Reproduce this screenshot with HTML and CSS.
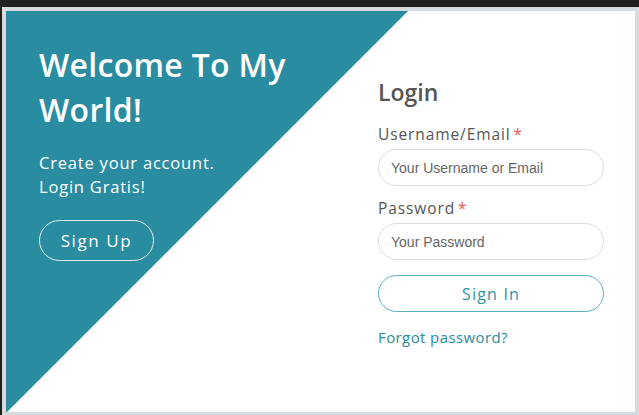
FILE: index.html
```html
<!DOCTYPE html>
<html lang="en">
<head>
<meta charset="utf-8">
<title>Login</title>
<link rel="stylesheet" href="styles.css">
</head>
<body>
<div class="frame">
  <div class="card">
    <div class="accent"></div>
    <section class="welcome">
      <h1 class="welcome-title">Welcome To My World!</h1>
      <p class="welcome-text">Create your account.<br>Login Gratis!</p>
      <button class="btn-outline-light" type="button">Sign Up</button>
    </section>
    <section class="login">
      <h2 class="login-title">Login</h2>
      <form class="login-form">
        <label class="field-label" for="user">Username/Email<span class="req">*</span></label>
        <input class="field-input" id="user" type="text" placeholder="Your Username or Email">
        <label class="field-label" for="pass">Password<span class="req">*</span></label>
        <input class="field-input" id="pass" type="password" placeholder="Your Password">
        <button class="btn-outline-teal" type="button">Sign In</button>
        <a class="forgot" href="#">Forgot password?</a>
      </form>
    </section>
  </div>
</div>
</body>
</html>
```
FILE: styles.css
```css
html { background: #202020; }
body {
  margin: 0;
  padding: 7px 0 0 2px;
  font-family: "Open Sans", "Noto Sans", sans-serif;
}
.frame {
  background: #d7dbde;
  padding: 4px 4px 3px 4px;
  height: 401px;
}
.card {
  position: relative;
  background: #fff;
  height: 401px;
  width: 629px;
  display: grid;
  grid-template-columns: 372px 226px;
  overflow: hidden;
}
.accent {
  position: absolute;
  inset: 0;
  background: #2a8ca0;
  clip-path: polygon(0 0, 402px 0, 0 402px);
}
.welcome {
  position: relative;
  padding: 31px 0 0 33px;
  color: #fff;
}
.welcome-title {
  margin: 0;
  font-size: 32px;
  font-weight: 600;
  line-height: 45px;
  letter-spacing: 0.3px;
  width: 270px;
}
.welcome-text {
  margin: 19px 0 0;
  font-size: 16.5px;
  line-height: 24px;
  letter-spacing: 0.8px;
}
.btn-outline-light {
  margin-top: 21px;
  width: 115px;
  height: 41px;
  border: 1px solid rgba(255,255,255,0.85);
  border-radius: 21px;
  background: transparent;
  color: #fff;
  font-family: inherit;
  font-size: 17px;
  letter-spacing: 1.6px;
}
.login {
  position: relative;
  padding-top: 66px;
}
.login-title {
  margin: 0;
  font-size: 23px;
  font-weight: 600;
  color: #555;
  line-height: 30px;
}
.login-form {
  display: flex;
  flex-direction: column;
  margin-top: 17px;
}
.field-label {
  font-size: 15.5px;
  color: #555;
  letter-spacing: 0.9px;
  line-height: 20px;
  margin-bottom: 5px;
}
.req { color: #f05a5a; margin-left: 3px; }
.field-input {
  box-sizing: border-box;
  height: 37px;
  border: 1px solid #dcdcdc;
  border-radius: 19px;
  padding: 0 12px;
  font-family: "Liberation Sans", Arial, sans-serif;
  font-size: 14px;
  color: #444;
  margin-bottom: 12px;
  outline: none;
}
.field-input::placeholder { color: #666; }
.btn-outline-teal {
  margin-top: 3px;
  height: 37px;
  border: 1px solid #5aaebe;
  border-radius: 19px;
  background: #fff;
  color: #3391a5;
  font-family: inherit;
  font-size: 16px;
  letter-spacing: 1.2px;
}
.forgot {
  margin-top: 15px;
  font-size: 15px;
  color: #2a8ca0;
  text-decoration: none;
  letter-spacing: 0.4px;
}
```
